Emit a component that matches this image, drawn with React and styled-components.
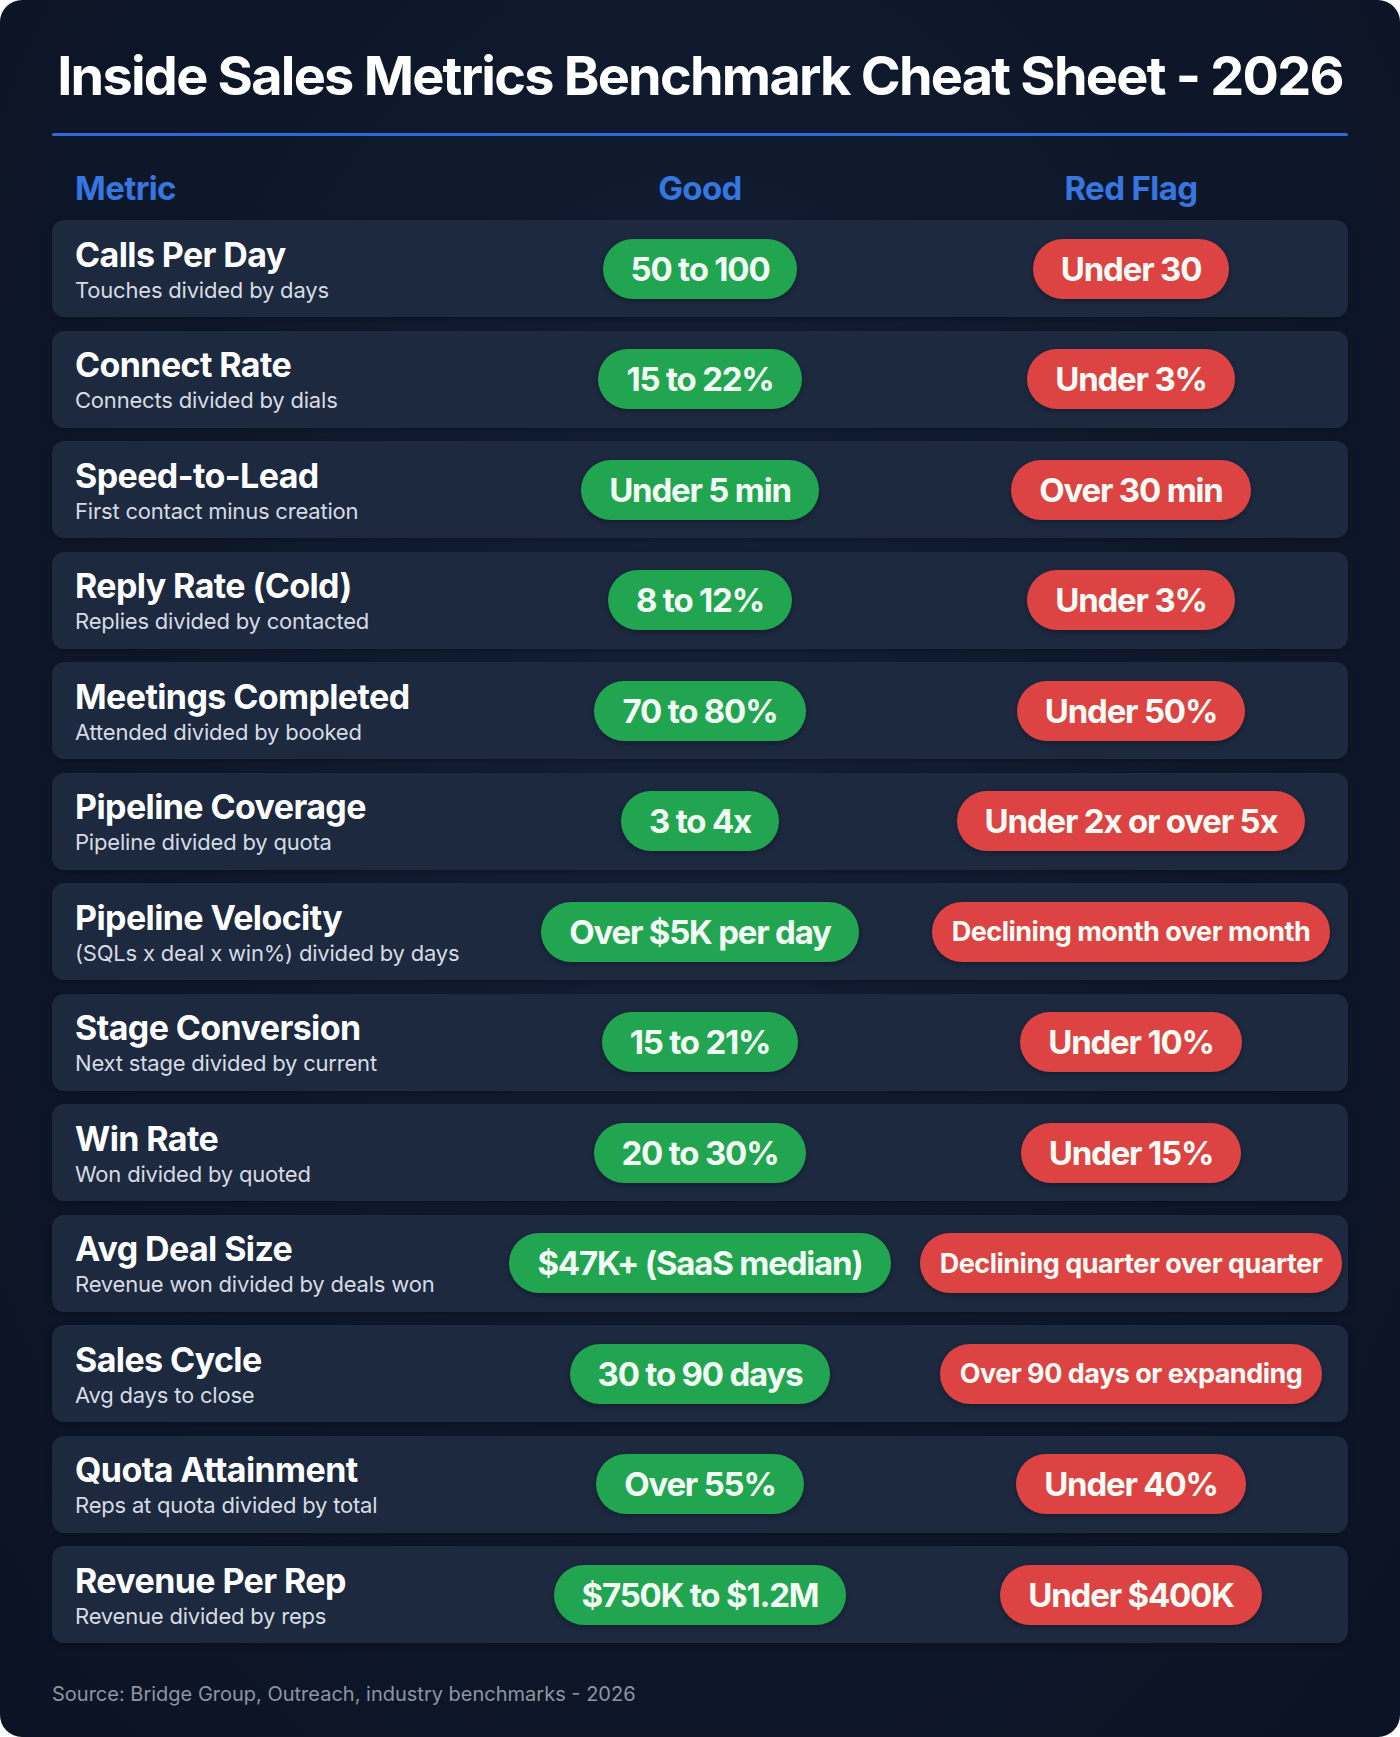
import React from 'react';
import styled, { createGlobalStyle } from 'styled-components';

const GlobalStyle = createGlobalStyle`
  html, body {
    margin: 0;
    padding: 0;
    background: #ffffff;
  }
  body {
    font-family: Inter, "Noto Sans", "Liberation Sans", sans-serif;
  }
`;

const StyledSheet = styled.div`
  width: 1400px;
  height: 1737px;
  box-sizing: border-box;
  border-radius: 22px;
  background: radial-gradient(ellipse at 50% 40%, #142038 0%, #0e1729 60%, #0b1324 100%);
  padding: 42px 52px 0 52px;
  display: flex;
  flex-direction: column;
  overflow: hidden;
`;

const StyledTitle = styled.h1`
  margin: 0;
  color: #ffffff;
  font-size: 54px;
  line-height: 67px;
  font-weight: 700;
  text-align: center;
  letter-spacing: -1.75px;
  white-space: nowrap;
`;

const StyledRule = styled.div`
  height: 3px;
  background: #2d6ad8;
  margin-top: 24px;
  border-radius: 2px;
`;

const StyledGrid = styled.div`
  display: grid;
  grid-template-columns: 1fr 400px 422px;
  column-gap: 20px;
  align-items: center;
  padding: 0 6px 0 23px;
`;

const StyledHeader = styled(StyledGrid)`
  margin: 32px 0 12px;
  height: 40px;
`;

const StyledHeading = styled.div`
  color: #3676e0;
  font-size: 33px;
  font-weight: 700;
  letter-spacing: -0.6px;
  text-align: ${({ align }) => align || 'left'};
`;

const StyledList = styled.div`
  display: flex;
  flex-direction: column;
  gap: 13.5px;
`;

const StyledRow = styled(StyledGrid)`
  height: 97px;
  background: #1c293f;
  border-radius: 12px;
  box-shadow: 0 2px 6px rgba(0, 0, 0, 0.25);
`;

const StyledMetric = styled.div`
  display: flex;
  flex-direction: column;
  gap: 3px;
  padding-top: 3px;
`;

const StyledName = styled.div`
  color: #ffffff;
  font-size: 34px;
  line-height: 36px;
  font-weight: 700;
  letter-spacing: -0.6px;
`;

const StyledDesc = styled.div`
  color: #d6dbe4;
  font-size: 22px;
  line-height: 28px;
  font-weight: 400;
  letter-spacing: -0.2px;
`;

const StyledCell = styled.div`
  display: flex;
  justify-content: center;
`;

const StyledPill = styled.span`
  display: inline-flex;
  align-items: center;
  height: 60px;
  padding: 0 ${({ small }) => (small ? '20px' : '28px')};
  border-radius: 30px;
  white-space: nowrap;
  background: ${({ tone }) => (tone === 'good' ? '#22a550' : '#dd4343')};
  color: #f3fbf5;
  font-size: ${({ small }) => (small ? '27px' : '33px')};
  font-weight: 700;
  letter-spacing: ${({ small }) => (small ? '-0.5px' : '-1.2px')};
  box-shadow: 0 2px 6px rgba(0, 0, 0, 0.3);
`;

const StyledSource = styled.p`
  margin: 37px 0 0;
  color: #8d95a4;
  font-size: 20px;
  line-height: 28px;
`;

const metrics = [
  { name: 'Calls Per Day', desc: 'Touches divided by days', good: '50 to 100', bad: 'Under 30' },
  { name: 'Connect Rate', desc: 'Connects divided by dials', good: '15 to 22%', bad: 'Under 3%' },
  { name: 'Speed-to-Lead', desc: 'First contact minus creation', good: 'Under 5 min', bad: 'Over 30 min' },
  { name: 'Reply Rate (Cold)', desc: 'Replies divided by contacted', good: '8 to 12%', bad: 'Under 3%' },
  { name: 'Meetings Completed', desc: 'Attended divided by booked', good: '70 to 80%', bad: 'Under 50%' },
  { name: 'Pipeline Coverage', desc: 'Pipeline divided by quota', good: '3 to 4x', bad: 'Under 2x or over 5x' },
  {
    name: 'Pipeline Velocity',
    desc: '(SQLs x deal x win%) divided by days',
    good: 'Over $5K per day',
    bad: 'Declining month over month',
    smallBad: true,
  },
  { name: 'Stage Conversion', desc: 'Next stage divided by current', good: '15 to 21%', bad: 'Under 10%' },
  { name: 'Win Rate', desc: 'Won divided by quoted', good: '20 to 30%', bad: 'Under 15%' },
  {
    name: 'Avg Deal Size',
    desc: 'Revenue won divided by deals won',
    good: '$47K+ (SaaS median)',
    bad: 'Declining quarter over quarter',
    smallBad: true,
  },
  {
    name: 'Sales Cycle',
    desc: 'Avg days to close',
    good: '30 to 90 days',
    bad: 'Over 90 days or expanding',
    smallBad: true,
  },
  { name: 'Quota Attainment', desc: 'Reps at quota divided by total', good: 'Over 55%', bad: 'Under 40%' },
  { name: 'Revenue Per Rep', desc: 'Revenue divided by reps', good: '$750K to $1.2M', bad: 'Under $400K' },
];

const App = () => (
  <>
    <GlobalStyle />
    <StyledSheet>
      <StyledTitle>Inside Sales Metrics Benchmark Cheat Sheet - 2026</StyledTitle>
      <StyledRule />
      <StyledHeader>
        <StyledHeading>Metric</StyledHeading>
        <StyledHeading align="center">Good</StyledHeading>
        <StyledHeading align="center">Red Flag</StyledHeading>
      </StyledHeader>
      <StyledList>
        {metrics.map(m => (
          <StyledRow key={m.name}>
            <StyledMetric>
              <StyledName>{m.name}</StyledName>
              <StyledDesc>{m.desc}</StyledDesc>
            </StyledMetric>
            <StyledCell>
              <StyledPill tone="good">{m.good}</StyledPill>
            </StyledCell>
            <StyledCell>
              <StyledPill tone="bad" small={m.smallBad}>
                {m.bad}
              </StyledPill>
            </StyledCell>
          </StyledRow>
        ))}
      </StyledList>
      <StyledSource>Source: Bridge Group, Outreach, industry benchmarks - 2026</StyledSource>
    </StyledSheet>
  </>
);

export default App;
